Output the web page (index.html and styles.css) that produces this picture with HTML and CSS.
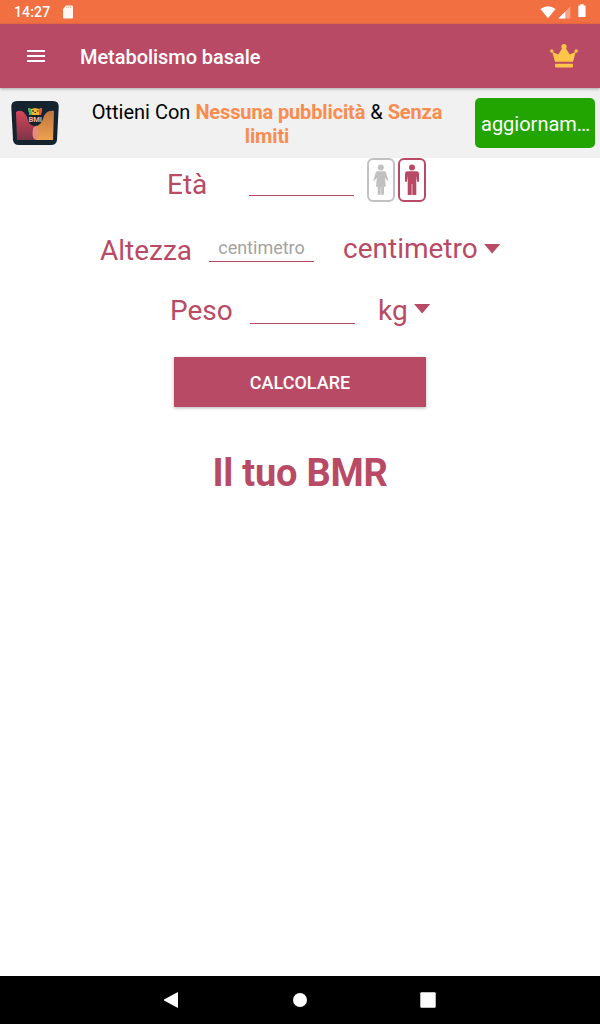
FILE: index.html
```html
<!DOCTYPE html>
<html lang="it">
<head>
    <meta charset="UTF-8">
    <meta name="viewport" content="width=device-width, initial-scale=1.0">
    <title>Metabolismo basale</title>
    <link rel="stylesheet" href="styles.css">
</head>
<body>

<div class="status-bar">
    <span class="clock">14:27</span>
    <svg class="sd-card" width="12" height="14" viewBox="0 0 12 14"><path d="M4 0.5H10Q11 0.5 11 1.5V12.5Q11 13.5 10 13.5H2Q1 13.5 1 12.5V4Z" fill="#fff" fill-opacity="0.95"/><path d="M4.5 2.2H9.5" stroke="#f26f42" stroke-width="1.5" stroke-dasharray="1 0.8" opacity="0.6"/></svg>
    <div class="status-icons">
        <svg width="16" height="13" viewBox="0 0 16 13"><path d="M8 12.3L0.4 3Q8 -2.3 15.6 3Z" fill="#fff"/></svg>
        <svg class="signal" width="13" height="13" viewBox="0 0 13 13"><path d="M12.3 0.5V12.5H0.3Z" fill="#fff" opacity="0.35"/><path d="M7.3 5.5V12.5H0.3Z" fill="#fff"/></svg>
        <svg class="battery" width="8" height="14" viewBox="0 0 8 14"><path d="M2.2 0.3H5.6V1.6H7.1Q7.6 1.6 7.6 2.2V12.5Q7.6 13 7.1 13H0.8Q0.3 13 0.3 12.5V2.2Q0.3 1.6 0.8 1.6H2.2Z" fill="#fff"/></svg>
    </div>
</div>

<header class="toolbar">
    <svg class="menu" width="18" height="12" viewBox="0 0 18 12"><path d="M0 1H18M0 6H18M0 11H18" stroke="#fff" stroke-width="2"/></svg>
    <h1>Metabolismo basale</h1>
    <svg class="crown" width="28" height="24" viewBox="0 0 28 24" fill="#ffc548">
        <path d="M2.2 7.8L8.3 10.4L13 3H15L19.7 10.4L25.8 7.8L23 17.8H5Z"/>
        <circle cx="14" cy="2.7" r="2.6"/>
        <circle cx="1.8" cy="7" r="1.7"/>
        <circle cx="26.2" cy="7" r="1.7"/>
        <rect x="5" y="19.8" width="18" height="3.7" rx="1"/>
    </svg>
</header>

<div class="promo">
    <svg class="logo" width="48" height="46" viewBox="0 0 48 46">
        <defs>
            <linearGradient id="red" x1="0" y1="0" x2="0" y2="1"><stop offset="0" stop-color="#d9455a"/><stop offset="1" stop-color="#7c3548"/></linearGradient>
            <linearGradient id="orange" x1="0" y1="0" x2="0" y2="1"><stop offset="0" stop-color="#c0743f"/><stop offset="1" stop-color="#eda24e"/></linearGradient>
        </defs>
        <path d="M6 1H42Q48 1 47.7 7L46 40Q45.500 45 40 45H8Q2.500 45 2 40L0.300 7Q0 1 6 1Z" fill="#15232f"/>
        <path d="M5 12Q11 8 15.500 16Q19 24 25 25V40H6Z" fill="url(#red)"/>
        <path d="M25 25Q31 24 33 16Q36 10 43 11L42 40H25Z" fill="url(#orange)"/>
        <circle cx="24" cy="18.500" r="7.500" fill="#15232f"/>
        <ellipse cx="24.500" cy="33" rx="3" ry="6.800" fill="#e58c7c"/>
        <path d="M17 8L20 9L24 8L28 9L31 8L30 15H18.500Z" fill="#eeb633"/>
        <path d="M17 8L20 8.700L21 15H18.500Z" fill="#43b56b"/>
        <path d="M28 8.700L31 8L30 15H28Z" fill="#e65a3c"/>
        <path d="M21 11H23M23.500 12.500H25M26 11H27.500" stroke="#15232f"/>
        <text x="24.200" y="22.200" text-anchor="middle" class="logo-text">BMI</text>
    </svg>
    <p>Ottieni Con <b>Nessuna pubblicità</b> &amp; <b>Senza limiti</b></p>
    <button class="upgrade">aggiornamento</button>
</div>

<main>
    <div class="row age">
        <label for="age">Età</label>
        <input type="text" id="age">
        <div class="gender">
            <svg class="female" width="28" height="44" viewBox="0 0 28 44">
                <rect x="1" y="1" width="26" height="42" rx="5" fill="#fff" stroke="currentColor" stroke-width="2"/>
                <circle cx="13.800" cy="9.500" r="3"/>
                <path d="M10.800 13.300H17Q18.500 13.300 19 14.500L21.200 21.500Q21.400 23 20.200 22.800L18 19.500L18.800 28.700H17V36.800H10.800V28.700H9L9.800 19.500L7.600 22.800Q6.300 23 6.500 21.500L8.800 14.500Q9.300 13.300 10.800 13.300Z"/>
                <path d="M13.900 29V37" stroke="#fff" stroke-width="0.500"/>
            </svg>
            <svg class="male" width="28" height="44" viewBox="0 0 28 44">
                <rect x="1" y="1" width="26" height="42" rx="5" fill="#fff" stroke="currentColor" stroke-width="2"/>
                <circle cx="14" cy="9.500" r="3"/>
                <path d="M9.500 13.300H18.500Q21 13.300 21 16V23Q21 24 20 24Q19.200 24 19 23L18.300 18V37H9.700V18L9 23Q8.800 24 8 24Q7 24 7 23V16Q7 13.300 9.500 13.300Z"/>
                <path d="M14 26V37" stroke="#fff" stroke-width="0.600"/>
            </svg>
        </div>
    </div>

    <div class="row height">
        <label for="height">Altezza</label>
        <input type="text" id="height" placeholder="centimetro">
        <div class="unit">centimetro <i class="arrow"></i></div>
    </div>

    <div class="row weight">
        <label for="weight">Peso</label>
        <input type="text" id="weight">
        <div class="unit">kg <i class="arrow"></i></div>
    </div>

    <button class="calculate">CALCOLARE</button>

    <h2>Il tuo BMR</h2>
</main>

<nav class="nav-bar">
    <svg width="14" height="16" viewBox="0 0 14 16"><path d="M14 0V16L0 8.500V7.500Z" fill="#fff"/></svg>
    <svg class="home" width="14" height="14" viewBox="0 0 14 14"><circle cx="7" cy="7" r="7" fill="#fff"/></svg>
    <svg width="16" height="16" viewBox="0 0 16 16"><rect x="0.300" y="0.300" width="15.400" height="15.400" rx="1" fill="#fff"/></svg>
</nav>

</body>
</html>
```
FILE: styles.css
```css
* {
    box-sizing: border-box;
}
body {
    margin: 0;
    height: 1024px;
    display: flex;
    flex-direction: column;
    font-family: Roboto, sans-serif;
    color: #b94a66;
    background-color: #fff;
    overflow: hidden;
}
svg {
    display: block;
    flex: none;
}
h1, h2, p {
    margin: 0;
}
button {
    border: none;
    padding: 0;
    font-family: inherit;
    color: white;
}
.status-bar {
    height: 24px;
    padding: 0 14px;
    display: flex;
    align-items: center;
    background-color: #f26f42;
    color: white;
}
.clock {
    width: 48px;
    font-size: 14px;
    font-weight: 500;
    letter-spacing: 0.15px;
}
.status-icons {
    margin-left: auto;
    display: flex;
    align-items: center;
}
.signal {
    margin-left: 2px;
}
.battery {
    margin-left: 7px;
    margin-bottom: 2px;
}
.toolbar {
    height: 64px;
    padding: 0 22px 0 27px;
    display: flex;
    align-items: center;
    background-color: #b94a66;
    color: white;
    box-shadow: 0 1px 3px rgba(0, 0, 0, 0.3);
    z-index: 1;
}
.menu {
    margin-right: 35px;
}
.toolbar h1 {
    padding-top: 2px;
    font-size: 20px;
    font-weight: 500;
    letter-spacing: -0.05px;
}
.crown {
    margin-left: auto;
}
.promo {
    height: 70px;
    padding: 0 5px 0 11px;
    display: flex;
    align-items: center;
    background-color: #f1f1f1;
    color: #000;
}
.logo-text {
    font-size: 7.5px;
    font-weight: 700;
    fill: #efb4a3;
}
.promo p {
    flex: 1;
    padding: 2px 19px 0 19px;
    font-size: 20px;
    line-height: 24px;
    text-align: center;
}
.promo b {
    color: #fa8c50;
    letter-spacing: -0.13px;
}
.upgrade {
    width: 120px;
    height: 50px;
    padding: 2px 4px 0 6px;
    border-radius: 5px;
    background-color: #22a500;
    font-size: 20px;
    text-align: left;
    overflow: hidden;
    white-space: nowrap;
    text-overflow: ellipsis;
}
main {
    flex: 1;
    display: flex;
    flex-direction: column;
}
.row {
    display: flex;
    align-items: flex-start;
    font-size: 28px;
    line-height: 33px;
}
.row input {
    width: 105px;
    height: 38px;
    padding: 10px 0 0;
    border: none;
    border-bottom: 1px solid #b94a66;
    border-radius: 0;
    outline: none;
    background: none;
    font-family: inherit;
    font-size: 18px;
    text-align: center;
    color: #b94a66;
}
.row input::placeholder {
    color: #a3a3a3;
}
.age {
    height: 66px;
    padding-left: 167px;
}
.age label {
    width: 82px;
    padding-top: 10px;
}
.gender {
    display: flex;
    gap: 3px;
    margin-left: 13px;
}
.female {
    color: #c1c1c1;
    fill: currentColor;
}
.male {
    color: #b94a66;
    fill: currentColor;
}
.height {
    height: 62px;
    padding-left: 100px;
}
.height label {
    width: 109px;
    padding-top: 10px;
}
.height .unit {
    margin-left: 29px;
    padding-top: 8px;
}
.weight {
    height: 71px;
    padding-left: 170px;
}
.weight label {
    width: 80px;
    padding-top: 8px;
}
.weight .unit {
    margin-left: 23px;
    padding-top: 8px;
}
.unit {
    display: flex;
    align-items: center;
    gap: 6px;
}
.arrow {
    width: 17px;
    height: 10px;
    background-color: #b94a66;
    clip-path: polygon(0 0, 100% 0, 50% 100%);
}
.weight .arrow {
    margin-bottom: 4px;
}
.calculate {
    width: 252px;
    height: 50px;
    align-self: center;
    background-color: #b94a66;
    box-shadow: 0 1px 3px rgba(0, 0, 0, 0.3);
    font-size: 18px;
    font-weight: 500;
}
h2 {
    margin-top: 44px;
    font-size: 38px;
    line-height: 45px;
    letter-spacing: -0.25px;
    text-align: center;
}
.nav-bar {
    height: 48px;
    padding: 0 164px;
    display: flex;
    align-items: center;
    justify-content: space-between;
    background-color: #000;
}
.home {
    margin-left: 2px;
}
```
